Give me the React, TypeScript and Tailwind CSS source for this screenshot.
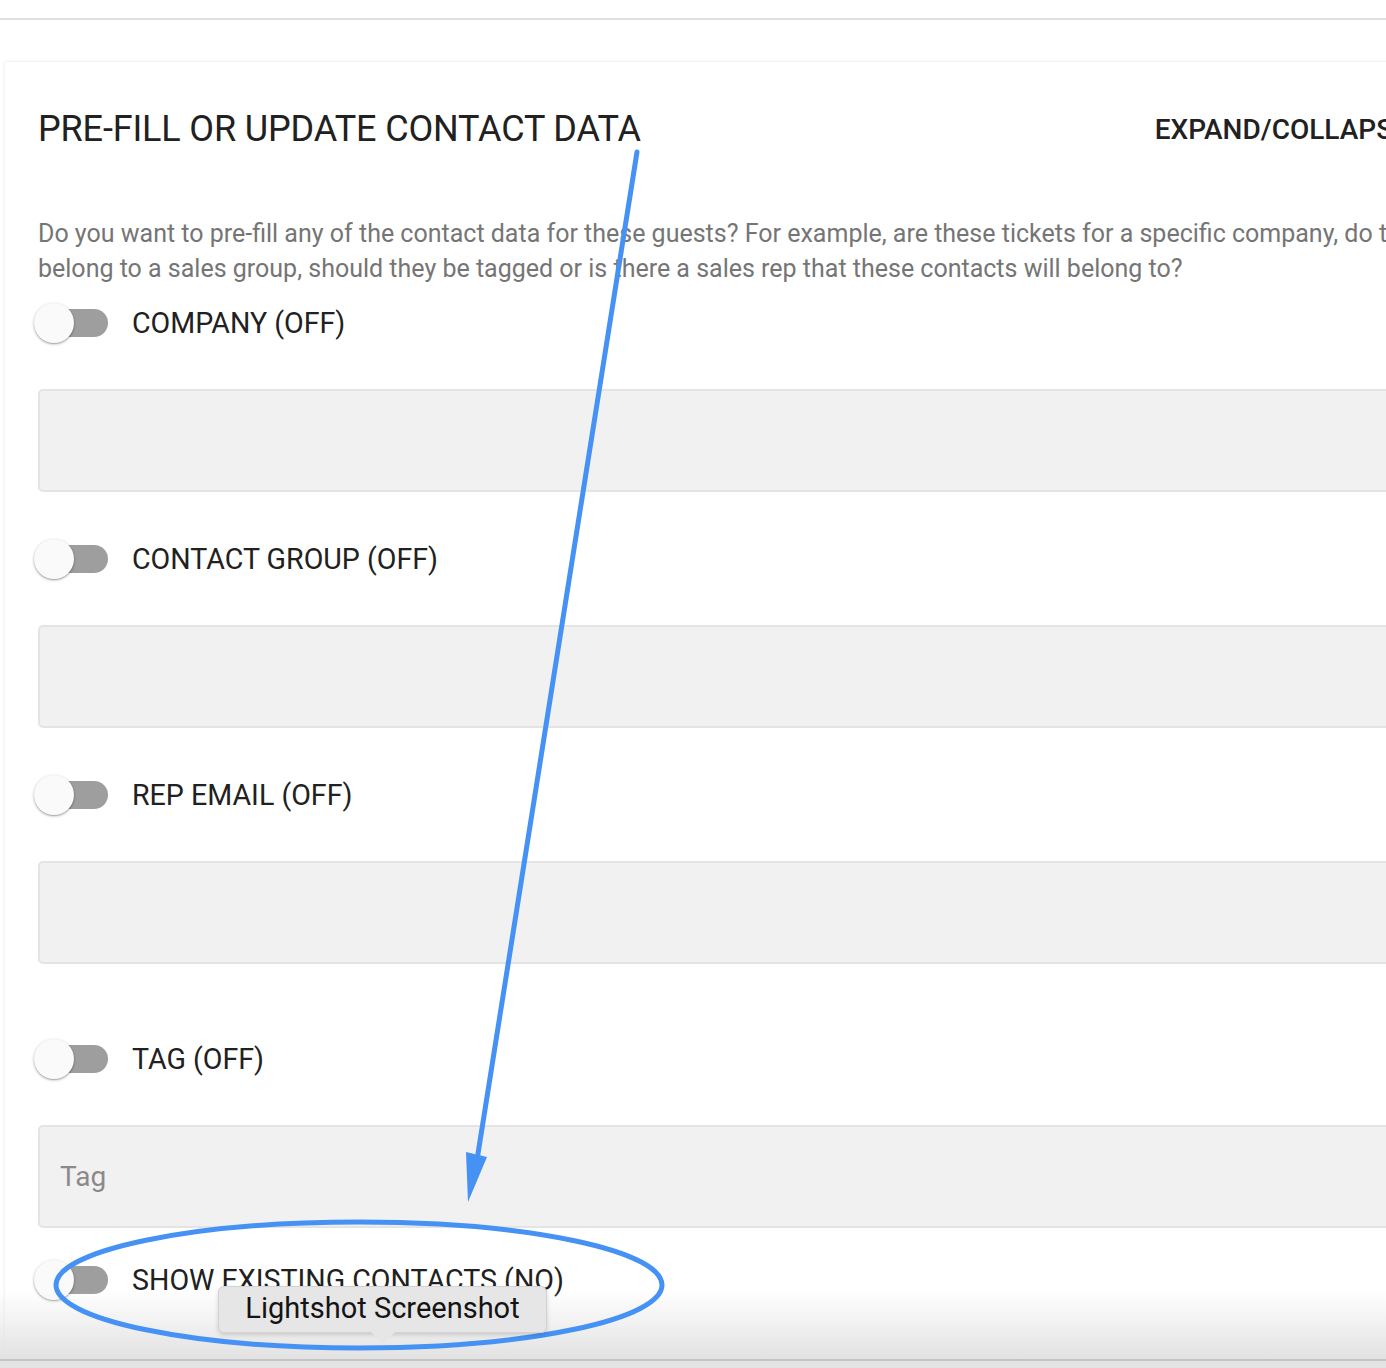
import { useState } from 'react';

const fields = [
  { label: 'COMPANY (OFF)', placeholder: '', gap: 'mt-[13px]' },
  { label: 'CONTACT GROUP (OFF)', placeholder: '', gap: 'mt-[43px]' },
  { label: 'REP EMAIL (OFF)', placeholder: '', gap: 'mt-[43px]' },
  { label: 'TAG (OFF)', placeholder: 'Tag', gap: 'mt-[71px]' },
];

function Toggle({ on = false }: { on?: boolean }) {
  return (
    <div className="relative w-[76px] h-[40px] flex items-center shrink-0">
      <div className={`ml-[2px] w-[68px] h-[28px] rounded-full ${on ? 'bg-[#90caf9]' : 'bg-[#9e9e9e]'}`} />
      <div className="absolute left-[-4px] top-0 h-[40px] w-[40px] rounded-full bg-[#fafafa] shadow-[0_1px_3px_rgba(0,0,0,0.3),0_1px_1px_rgba(0,0,0,0.14)]" />
    </div>
  );
}

function ToggleRow({ label, className = '' }: { label: string; className?: string }) {
  const [on] = useState(false);
  return (
    <div className={`h-[48px] flex items-center gap-[18px] ${className}`}>
      <Toggle on={on} />
      <span className="text-[28.6px] text-[#212121] leading-none">{label}</span>
    </div>
  );
}

export default function App() {
  return (
    <div
      className="relative w-[1386px] h-[1368px] overflow-hidden bg-white"
      style={{ fontFamily: 'Roboto, "Liberation Sans", sans-serif' }}
    >
      {/* top app bar edge */}
      <div className="h-[20px] border-b-2 border-[#e0e0e0]" />

      <div className="mt-[42px] ml-[5px] w-[1500px] bg-white shadow-[0_0_3px_rgba(0,0,0,0.12)] pl-[33px] pt-[47px] pb-[200px]">
        <div className="flex items-center h-[41px]">
          <h2 className="text-[36px] leading-[41px] font-normal text-[#212121] tracking-[-0.15px] whitespace-nowrap">
            PRE-FILL OR UPDATE CONTACT DATA
          </h2>
          <span className="ml-[514px] text-[28px] font-medium text-[#212121] whitespace-nowrap">EXPAND/COLLAPSE</span>
        </div>

        <p className="mt-[66px] w-[1460px] text-[25px] leading-[35px] text-[#757575] whitespace-nowrap">
          Do you want to pre-fill any of the contact data for these guests? For example, are these tickets for a specific
          company, do they<br />
          belong to a sales group, should they be tagged or is there a sales rep that these contacts will belong to?
        </p>

        {fields.map((f) => (
          <div key={f.label}>
            <ToggleRow label={f.label} className={f.gap} />
            <div className="mt-[42px] h-[103px] rounded-[5px] border-2 border-[#e4e4e4] bg-[#f1f1f1] flex items-center pl-[20px]">
              <span className="text-[28px] text-[#8a8a8a]">{f.placeholder}</span>
            </div>
          </div>
        ))}

        <ToggleRow label="SHOW EXISTING CONTACTS (NO)" className="mt-[28px]" />
      </div>

      {/* dock fade at the bottom of the screen */}
      <div className="absolute left-0 right-0 top-[1290px] h-[69px] bg-gradient-to-b from-white/0 to-[#e2e2e2]" />
      <div className="absolute left-0 right-0 top-[1359px] h-[2px] bg-[#c4c4c4]" />
      <div className="absolute left-0 right-0 top-[1361px] h-[7px] bg-[#e3e3e3]" />

      {/* annotation: arrow + ellipse */}
      <svg className="absolute inset-0 pointer-events-none" width="1386" height="1368" viewBox="0 0 1386 1368">
        <line x1="637" y1="152" x2="477" y2="1160" stroke="#4592f4" strokeWidth="5" strokeLinecap="round" />
        <polygon points="466,1152 487,1157 468,1202" fill="#4592f4" />
        <ellipse cx="359" cy="1285" rx="303" ry="63" fill="none" stroke="#4592f4" strokeWidth="5" />
      </svg>

      {/* system tooltip */}
      <div className="absolute left-[218px] top-[1286px] w-[329px] h-[47px] rounded-[6px] bg-[#e6e6e6] border border-[#d2d2d2] shadow-[0_2px_4px_rgba(0,0,0,0.15)] flex items-center justify-center">
        <span className="text-[29px] text-[#141414] leading-none -mt-[3px]">Lightshot Screenshot</span>
        <div className="absolute left-[152px] bottom-[-12px] w-0 h-0 border-l-[12px] border-r-[12px] border-t-[12px] border-l-transparent border-r-transparent border-t-[#e6e6e6]" />
      </div>
    </div>
  );
}
